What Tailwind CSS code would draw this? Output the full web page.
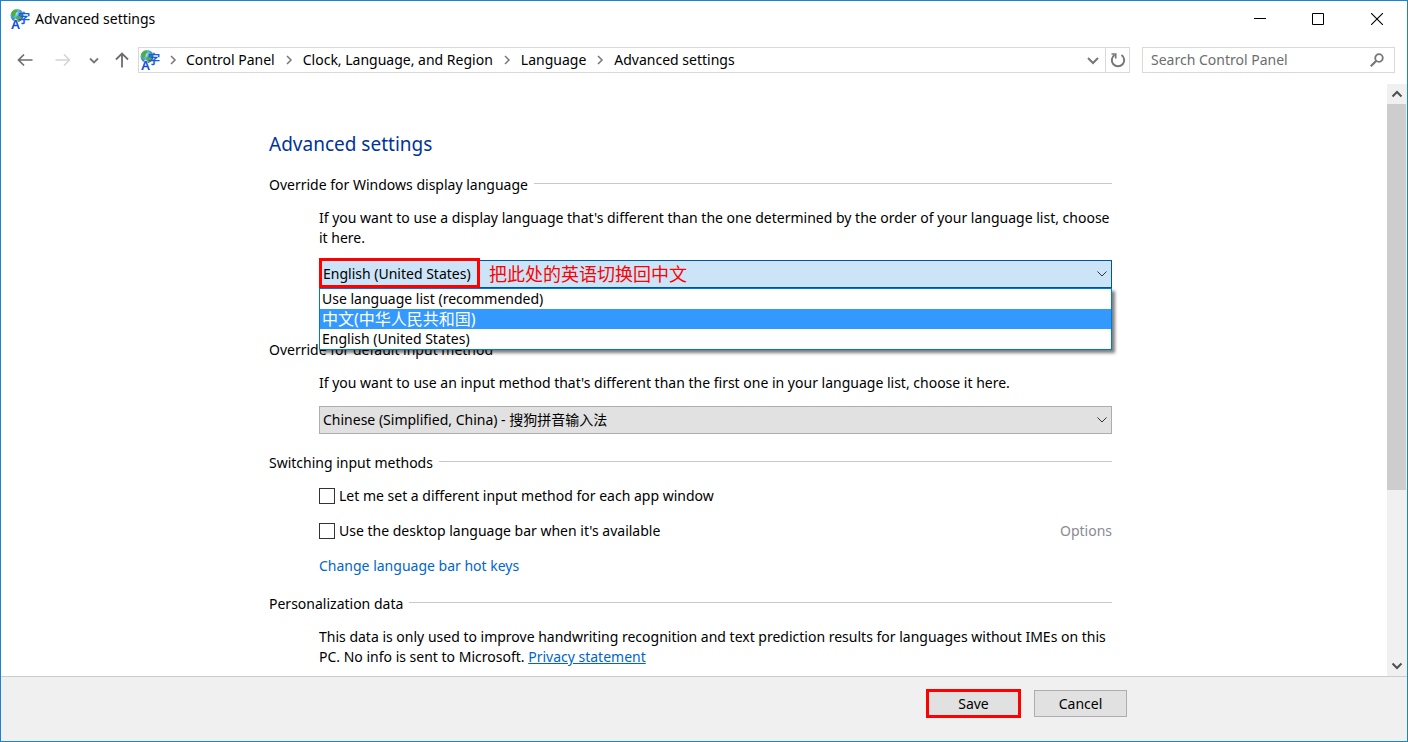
<!DOCTYPE html>
<html lang="en">
<head>
  <meta charset="UTF-8" />
  <meta name="viewport" content="width=device-width, initial-scale=1.0" />
  <title>Advanced settings</title>
  <script src="https://cdn.jsdelivr.net/npm/@tailwindcss/browser@4"></script>
</head>
<body class="bg-white font-['Noto_Sans','Noto_Sans_CJK_SC',sans-serif] text-[14px] leading-5 text-black">
  <!-- Shared icons -->
  <svg class="absolute size-0" aria-hidden="true">
    <defs>
      <radialGradient id="globe" cx="35%" cy="30%" r="75%">
        <stop offset="0" stop-color="#d8f4ff" />
        <stop offset="0.45" stop-color="#4fb0e0" />
        <stop offset="1" stop-color="#0a4f9c" />
      </radialGradient>
    </defs>
    <symbol id="language" viewBox="0 0 20 20">
      <circle cx="7" cy="6.5" r="6.5" fill="url(#globe)" />
      <path d="M1 4.500C2 2 4 .6 6 .5l2 1.500-2 2-1 3-2.500 1.500zM7 7l3-1 2 2-1.500 3.500L8 12.500 6 10zM10 .8l2.500 2L11 4z" fill="#4fae3c" />
      <text x="8" y="14" font-family="Noto Sans CJK SC" font-size="12" fill="#1556e8" stroke="#1556e8" stroke-width=".5">字</text>
      <text x="1.500" y="19.500" font-family="Liberation Sans" font-size="12" fill="#0f4fe0" stroke="#fff" stroke-width="1.500" paint-order="stroke">A</text>
      <text x="1.500" y="19.500" font-family="Liberation Sans" font-size="12" fill="#0f4fe0" stroke="#0f4fe0" stroke-width=".4">A</text>
    </symbol>
    <symbol id="chevron-down" viewBox="0 0 12 12">
      <path d="M1.500 3.500L6 8l4.500-4.500" fill="none" stroke="currentColor" />
    </symbol>
    <symbol id="chevron-right" viewBox="0 0 8 12">
      <path d="M2 2l4 4-4 4" fill="none" stroke="#777" stroke-width="1.500" />
    </symbol>
  </svg>

  <div class="flex h-screen flex-col overflow-hidden border border-[#1883d7]">
    <!-- Title bar -->
    <header class="flex h-9 shrink-0 items-center justify-between pl-[9px] pr-2">
      <div class="flex items-center gap-[5px]">
        <svg class="size-5"><use href="#language" /></svg>
        <h1>Advanced settings</h1>
      </div>
      <div class="flex items-center">
        <button aria-label="Minimize" class="flex h-9 w-[58px] items-center justify-center">
          <svg class="size-3" viewBox="0 0 12 12"><path d="M0 5.500h12" stroke="#000" /></svg>
        </button>
        <button aria-label="Maximize" class="flex h-9 w-[58px] items-center justify-center">
          <svg class="size-3" viewBox="0 0 12 12"><path d="M.5.5h11v11H.5z" fill="none" stroke="#000" /></svg>
        </button>
        <button aria-label="Close" class="flex h-9 w-[52px] items-center justify-end pr-4">
          <svg class="size-3" viewBox="0 0 12 12"><path d="M0 0l12 12M12 0L0 12" stroke="#000" stroke-width="1.100" /></svg>
        </button>
      </div>
    </header>

    <!-- Address bar -->
    <div class="flex h-[47px] shrink-0 items-center pb-px pl-4 pr-3">
      <nav class="flex items-center" aria-label="History">
        <button aria-label="Back" class="mr-[22px]">
          <svg class="h-4 w-4" viewBox="0 0 16 16"><path d="M15.500 8H1.500M7 2.500L1.500 8 7 13.500" fill="none" stroke="#6d6d6d" stroke-width="1.700" /></svg>
        </button>
        <button aria-label="Forward" class="mr-[18px]" disabled>
          <svg class="h-4 w-4" viewBox="0 0 16 16"><path d="M.5 8h14M9 2.500L14.500 8 9 13.500" fill="none" stroke="#d4d4d4" stroke-width="1.500" /></svg>
        </button>
        <button aria-label="Recent locations" class="mr-[15px]">
          <svg class="h-3 w-[10px]" viewBox="0 0 10 12"><path d="M1 4.500l4 4 4-4" fill="none" stroke="#777" stroke-width="1.800" /></svg>
        </button>
        <button aria-label="Up" class="mr-2">
          <svg class="h-4 w-4" viewBox="0 0 16 16"><path d="M8 15.500v-14M2 7.500L8 1.500l6 6" fill="none" stroke="#6d6d6d" stroke-width="1.800" /></svg>
        </button>
      </nav>
      <div class="flex h-[26px] flex-1 items-center border border-[#d9d9d9]">
        <svg class="mr-[9px] ml-[1px] size-5"><use href="#language" /></svg>
        <svg class="mr-[9px] h-3 w-2"><use href="#chevron-right" /></svg>
        <a href="#">Control Panel</a>
        <svg class="mx-[10px] h-3 w-2"><use href="#chevron-right" /></svg>
        <a href="#">Clock, Language, and Region</a>
        <svg class="mx-[10px] h-3 w-2"><use href="#chevron-right" /></svg>
        <a href="#">Language</a>
        <svg class="mx-[10px] h-3 w-2"><use href="#chevron-right" /></svg>
        <a href="#">Advanced settings</a>
        <button aria-label="Previous locations" class="ml-auto flex h-full w-6 items-center justify-center">
          <svg class="size-3" viewBox="0 0 12 12"><path d="M1 4l5 5 5-5" fill="none" stroke="#777" stroke-width="2" /></svg>
        </button>
        <button aria-label="Refresh" class="flex h-full w-6 items-center justify-center border-l border-[#d9d9d9]">
          <svg class="size-4" viewBox="0 0 16 16"><path d="M11.500 3A6.200 6.200 0 1 1 4.500 3" fill="none" stroke="#777" stroke-width="2" /><path d="M1.500 2h4.200v4.500" fill="none" stroke="#777" stroke-width="1.700" /></svg>
        </button>
      </div>
      <form class="ml-3 flex h-[26px] w-[253px] items-center border border-[#d9d9d9] pr-[10px] pl-2">
        <input type="search" aria-label="Search Control Panel" placeholder="Search Control Panel" class="min-w-0 flex-1 placeholder:text-[#6d6d6d] focus:outline-none" />
        <button aria-label="Search">
          <svg class="size-[14px]" viewBox="0 0 14 14"><circle cx="9" cy="5" r="3.800" fill="none" stroke="#777" stroke-width="1.800" /><path d="M6.300 7.700L.8 13.200" stroke="#777" stroke-width="2.200" /></svg>
        </button>
      </form>
    </div>

    <!-- Content -->
    <div class="flex min-h-0 flex-1">
      <main class="flex-1 overflow-hidden">
        <div class="mx-auto max-w-[850px] pt-[46px] pr-[7px]">
          <h2 class="text-[19px] leading-7 text-[#003399]">Advanced settings</h2>

          <section class="mt-[17px]">
            <div class="flex items-center gap-[6px]">
              <h3>Override for Windows display language</h3>
              <div class="mb-1 h-px flex-1 bg-[#c8c8c8]"></div>
            </div>
            <div class="mt-[13px] pl-[50px]">
              <label for="displayLanguage" class="block">If you want to use a display language that's different than the one determined by the order of your language list, choose it here.</label>
              <div class="relative mt-3">
                <select id="displayLanguage" class="block h-7 w-full appearance-none border border-[#00559b] bg-[#cce4f7] pl-[3px]">
                  <option>Use language list (recommended)</option>
                  <option>中文(中华人民共和国)</option>
                  <option selected>English (United States)</option>
                </select>
                <svg class="pointer-events-none absolute top-2 right-1 size-3 text-[#333]"><use href="#chevron-down" /></svg>
                <!-- Red highlight and note -->
                <div class="pointer-events-none absolute -top-[2px] left-0 h-[30px] w-[161px] border-3 border-[#fe0000]"></div>
                <p class="pointer-events-none absolute top-1 left-[170px] text-[18px] leading-5 text-[#fe0000]">把此处的英语切换回中文</p>
                <!-- Open list -->
                <ul role="listbox" aria-label="Display language" class="absolute top-full left-0 z-10 w-full border border-[#0078d7] bg-white shadow-[3px_3px_3px_rgba(0,0,0,0.5)]">
                  <li role="option" class="h-5 pl-[2px]">Use language list (recommended)</li>
                  <li role="option" aria-selected="true" class="h-5 bg-[#3399ff] pl-[2px] text-base leading-5 text-white">中文(中华人民共和国)</li>
                  <li role="option" class="h-5 pl-[2px]">English (United States)</li>
                </ul>
              </div>
            </div>
          </section>

          <section class="mt-[52px]">
            <div class="flex items-center gap-[6px]">
              <h3>Override for default input method</h3>
              <div class="mb-1 h-px flex-1 bg-[#c8c8c8]"></div>
            </div>
            <div class="mt-[13px] pl-[50px]">
              <label for="inputMethod" class="block">If you want to use an input method that's different than the first one in your language list, choose it here.</label>
              <div class="relative mt-[13px]">
                <select id="inputMethod" class="block h-7 w-full appearance-none border border-[#adadad] bg-[#e1e1e1] pl-[3px]">
                  <option>Chinese (Simplified, China) - 搜狗拼音输入法</option>
                </select>
                <svg class="pointer-events-none absolute top-2 right-1 size-3 text-[#333]"><use href="#chevron-down" /></svg>
              </div>
            </div>
          </section>

          <section class="mt-[19px]">
            <div class="flex items-center gap-[6px]">
              <h3>Switching input methods</h3>
              <div class="mb-1 h-px flex-1 bg-[#c8c8c8]"></div>
            </div>
            <div class="mt-[13px] flex flex-col gap-[15px] pl-[50px]">
              <div class="flex items-center gap-1">
                <input id="perApp" type="checkbox" class="size-4 appearance-none border border-[#333] bg-white" />
                <label for="perApp">Let me set a different input method for each app window</label>
              </div>
              <div class="flex items-center gap-1">
                <input id="languageBar" type="checkbox" class="size-4 appearance-none border border-[#333] bg-white" />
                <label for="languageBar">Use the desktop language bar when it's available</label>
                <a href="#" aria-disabled="true" class="ml-auto text-[#8a8a94]">Options</a>
              </div>
              <div><a href="#" class="text-[#0066cc]">Change language bar hot keys</a></div>
            </div>
          </section>

          <section class="mt-[18px]">
            <div class="flex items-center gap-[6px]">
              <h3>Personalization data</h3>
              <div class="mb-1 h-px flex-1 bg-[#c8c8c8]"></div>
            </div>
            <p class="mt-[13px] pl-[50px]">This data is only used to improve handwriting recognition and text prediction results for languages without IMEs on this PC. No info is sent to Microsoft. <a href="#" class="text-[#0066cc] underline">Privacy statement</a></p>
          </section>
        </div>
      </main>

      <!-- Scrollbar -->
      <div class="flex w-5 flex-col bg-[#f0f0f0]">
        <button aria-label="Scroll up" class="flex h-5 items-center justify-center">
          <svg class="size-3" viewBox="0 0 12 12"><path d="M1.500 8.500L6 4l4.500 4.500" fill="none" stroke="#505050" stroke-width="2" /></svg>
        </button>
        <div class="flex-1">
          <div class="mr-px h-[70%] bg-[#cdcdcd]"></div>
        </div>
        <button aria-label="Scroll down" class="flex h-5 items-center justify-center">
          <svg class="size-3" viewBox="0 0 12 12"><path d="M1.500 3.500L6 8l4.500-4.500" fill="none" stroke="#505050" stroke-width="2" /></svg>
        </button>
      </div>
    </div>

    <!-- Footer -->
    <footer class="h-[65px] shrink-0 border-t border-[#cccccc] bg-[#f0f0f0]">
      <div class="mx-auto flex max-w-[846px] items-center justify-end gap-[13px] pt-3">
        <button class="h-[29px] w-[95px] border-3 border-[#fe0000] bg-[#e1e1e1]">Save</button>
        <button class="h-[27px] w-[93px] border border-[#adadad] bg-[#e1e1e1]">Cancel</button>
      </div>
    </footer>
  </div>
</body>
</html>
